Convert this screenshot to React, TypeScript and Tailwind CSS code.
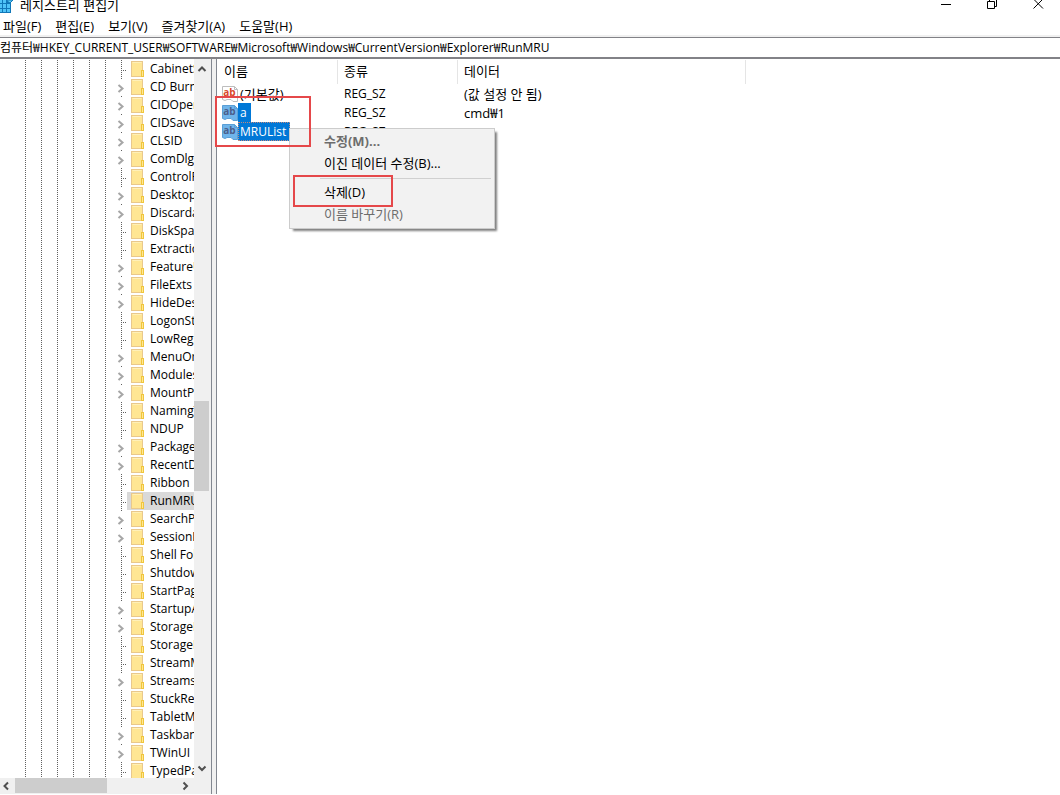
import { useState } from "react";
import clsx from "clsx";

interface TreeKey {
  name: string;
  expandable?: boolean;
}

interface RegistryValue {
  name: string;
  type: string;
  data: string;
}

const MENUS = ["파일(F)", "편집(E)", "보기(V)", "즐겨찾기(A)", "도움말(H)"];

const KEYS: TreeKey[] = [
  { name: "CabinetState" },
  { name: "CD Burning", expandable: true },
  { name: "CIDOpen", expandable: true },
  { name: "CIDSave", expandable: true },
  { name: "CLSID", expandable: true },
  { name: "ComDlg32", expandable: true },
  { name: "ControlPanel" },
  { name: "Desktop", expandable: true },
  { name: "Discardable", expandable: true },
  { name: "DiskSpaceChecking" },
  { name: "Extractions" },
  { name: "FeatureUsage", expandable: true },
  { name: "FileExts", expandable: true },
  { name: "HideDesktopIcons", expandable: true },
  { name: "LogonStats" },
  { name: "LowRegistry" },
  { name: "MenuOrder", expandable: true },
  { name: "Modules", expandable: true },
  { name: "MountPoints2", expandable: true },
  { name: "NamingTemplates" },
  { name: "NDUP" },
  { name: "PackageState", expandable: true },
  { name: "RecentDocs", expandable: true },
  { name: "Ribbon" },
  { name: "RunMRU" },
  { name: "SearchPlatform", expandable: true },
  { name: "SessionInfo", expandable: true },
  { name: "Shell Folders" },
  { name: "Shutdown" },
  { name: "StartPage" },
  { name: "StartupApproved", expandable: true },
  { name: "StorageProvider", expandable: true },
  { name: "StorageInfo" },
  { name: "StreamMRU" },
  { name: "Streams", expandable: true },
  { name: "StuckRects3" },
  { name: "TabletMode" },
  { name: "Taskband", expandable: true },
  { name: "TWinUI", expandable: true },
  { name: "TypedPaths" },
];

const VALUES: RegistryValue[] = [
  { name: "(기본값)", type: "REG_SZ", data: "(값 설정 안 됨)" },
  { name: "a", type: "REG_SZ", data: "cmd₩1" },
  { name: "MRUList", type: "REG_SZ", data: "" },
];

function AppIcon() {
  return (
    <svg width="14" height="14" viewBox="0 0 14 14" className="shrink-0">
      <path d="M0 0H11V13H0Z" fill="#1177b8" />
      <path d="M0 0H2V3H0ZM3 0H6V3H3ZM0 4H2V8H0ZM3 4H6V8H3ZM7 4H10V8H7ZM0 9H2V12H0ZM3 9H6V12H3ZM7 9H10V12H7Z" fill="#4fc3f7" />
      <path d="M7 0H13L10 3L7 1Z" fill="#5ccbf5" stroke="#1177b8" />
    </svg>
  );
}

function FolderIcon() {
  return (
    <svg width="14" height="16" viewBox="0 0 14 16" className="shrink-0">
      <rect x="0.5" y="0.5" width="11" height="15" fill="#ffe694" stroke="#e9c88c" />
      <path d="M1.5 1.5H10.5" stroke="#fff0b8" />
      <rect x="10.5" y="9.5" width="2" height="6" fill="#ffe694" stroke="#f0c63c" />
    </svg>
  );
}

// Dotted guide lines of the parent levels, then the branch or the chevron
function TreeBranch({ expandable }: { expandable?: boolean }) {
  return (
    <svg width="102" height="18" viewBox="0 0 102 18" className="shrink-0" fill="none">
      <path
        d="M0.5 0V18M16.5 0V18M32.5 0V18M48.5 0V18M64.5 0V18M80.5 0V18"
        stroke="#606060"
        strokeDasharray="1 1"
      />
      {expandable ? (
        <>
          <path d="M96 0.5H97" stroke="#606060" />
          <path d="M93.5 7L97.5 10.5L93.5 14" stroke="#a6a6a6" strokeWidth="2" />
        </>
      ) : (
        <path d="M96.5 0V18M98 10.5H102" stroke="#606060" strokeDasharray="1 1" />
      )}
    </svg>
  );
}

function StringIcon({ selected }: { selected: boolean }) {
  return (
    <svg width="16" height="16" viewBox="0 0 16 16" className="shrink-0">
      <path
        d="M0.5 0.5H12.5L15.5 3.5V15.5H11L9 13.5H5L3 14.5L0.5 13.5Z"
        fill={selected ? "#6fb4ea" : "#ffffff"}
        stroke={selected ? "#5a9fd6" : "#bdbdbd"}
      />
      <path d="M12.5 0.5V3.5H15.5" fill="none" stroke={selected ? "#5a9fd6" : "#bdbdbd"} />
      <text
        x="7.5"
        y="10"
        textAnchor="middle"
        fontSize="10"
        fontWeight="700"
        fontFamily="Open Sans, sans-serif"
        fill={selected ? "#4b5f8c" : "#d9472b"}
      >
        ab
      </text>
    </svg>
  );
}

function Arrow({ d }: { d: string }) {
  return (
    <svg width="10" height="10" viewBox="0 0 10 10" fill="none">
      <path d={d} stroke="#505050" strokeWidth="2" />
    </svg>
  );
}

function TitleBar() {
  return (
    <header className="flex h-4 shrink-0 items-start justify-between overflow-hidden">
      <div className="flex items-start gap-1.5">
        <AppIcon />
        <h1 className="text-[13px] leading-[10px]">레지스트리 편집기</h1>
      </div>
      <div className="flex gap-[35px] pr-4">
        <button type="button" aria-label="최소화">
          <svg width="11" height="10" viewBox="0 0 11 10">
            <path d="M0 4.5H10" stroke="#000" />
          </svg>
        </button>
        <button type="button" aria-label="이전 크기로 복원">
          <svg width="11" height="10" viewBox="0 0 11 10" fill="none" stroke="#000">
            <path d="M0.5 1.5H7.5V8.5H0.5ZM2.5 1V0M9.5 0V6.5H8" />
          </svg>
        </button>
        <button type="button" aria-label="닫기">
          <svg width="11" height="10" viewBox="0 0 11 10">
            <path d="M0.5 -1L10 8.5M10 -1L0.5 8.5" stroke="#000" />
          </svg>
        </button>
      </div>
    </header>
  );
}

function TreePane() {
  const [current, setCurrent] = useState("RunMRU");

  return (
    <aside className="flex w-[212px] shrink-0 flex-col border-r border-[#828790]">
      <div className="flex min-h-0 flex-1">
        <ul className="min-w-0 flex-1 overflow-hidden pt-px">
          {KEYS.map((key) => (
            <li key={key.name}>
              <button
                type="button"
                onClick={() => setCurrent(key.name)}
                className="flex h-[18px] w-full items-center pl-[25px] text-left"
              >
                <TreeBranch expandable={key.expandable} />
                <span
                  className={clsx(
                    "flex h-full min-w-0 flex-1 items-center gap-[5px] overflow-hidden whitespace-nowrap pl-1",
                    current === key.name && "bg-[#d9d9d9]"
                  )}
                >
                  <FolderIcon />
                  {key.name}
                </span>
              </button>
            </li>
          ))}
        </ul>

        {/* Vertical scrollbar */}
        <div className="flex w-[17px] shrink-0 flex-col justify-between bg-[#f0f0f0] pr-0.5">
          <button type="button" aria-label="위로" className="flex h-5 items-center justify-center">
            <Arrow d="M1.5 7L5 3.5L8.5 7" />
          </button>
          <div className="flex-1 pt-[322px]">
            <div className="h-[90px] bg-[#cdcdcd]" />
          </div>
          <button type="button" aria-label="아래로" className="flex h-5 items-center justify-center">
            <Arrow d="M1.5 3.5L5 7L8.5 3.5" />
          </button>
        </div>
      </div>

      {/* Horizontal scrollbar */}
      <div className="flex h-4 shrink-0 bg-[#f0f0f0] pr-4">
        <button type="button" aria-label="왼쪽" className="flex w-[15px] items-center pl-px">
          <Arrow d="M7 1.5L3.5 5L7 8.5" />
        </button>
        <div className="flex-1">
          <div className="h-[15px] w-[92px] bg-[#cdcdcd]" />
        </div>
        <button type="button" aria-label="오른쪽" className="flex w-[15px] items-center">
          <Arrow d="M3.5 1.5L7 5L3.5 8.5" />
        </button>
      </div>
    </aside>
  );
}

function ContextMenu() {
  const item = "flex h-[22px] w-full items-center pl-[34px]";
  return (
    <div className="absolute left-[72px] top-[69px] w-[206px] border border-[#cccccc] bg-[#f2f2f2] pb-[3px] pt-px text-[13px] shadow-[3px_3px_2px_-1px_#808080]">
      <button type="button" className={clsx(item, "font-bold text-[#6d6d6d]")}>
        수정(M)...
      </button>
      <button type="button" className={item}>
        이진 데이터 수정(B)...
      </button>
      <div className="ml-[30px] mr-[3px] mt-1 h-[3px] border-t border-[#d0d0d0]" />
      <button type="button" className={item}>
        삭제(D)
      </button>
      <button type="button" disabled className={clsx(item, "text-[#6d6d6d]")}>
        이름 바꾸기(R)
      </button>
      <div className="pointer-events-none absolute left-[3px] top-[46px] h-8 w-[100px] border-2 border-[#e5484a]" />
    </div>
  );
}

function ValuePane() {
  const [selected, setSelected] = useState(["a", "MRUList"]);

  return (
    <main className="relative min-w-0 flex-1 border-l border-[#828790]">
      <table className="mt-px w-[529px] table-fixed border-separate border-spacing-0 text-left">
        <thead>
          <tr className="h-6 text-[13px]">
            <th className="w-[121px] border-r border-[#e5e5e5] p-0 pb-0.5 pl-[7px] font-normal">이름</th>
            <th className="w-[120px] border-r border-[#e5e5e5] p-0 pb-0.5 pl-1.5 font-normal">종류</th>
            <th className="border-r border-[#e5e5e5] p-0 pb-0.5 pl-1.5 font-normal">데이터</th>
          </tr>
        </thead>
        <tbody>
          {VALUES.map((value) => {
            const isSelected = selected.includes(value.name);
            return (
              <tr key={value.name} className="h-[19px]" onClick={() => setSelected([value.name])}>
                <td className="p-0 pl-[5px]">
                  <div className="flex h-[19px] items-center">
                    <StringIcon selected={isSelected} />
                    <span
                      className={clsx(
                        "flex h-[19px] items-center border pl-px pr-[3px]",
                        isSelected ? "bg-[#0078d7] text-white" : "text-[13px]",
                        value.name === "MRUList" && isSelected ? "border-dotted border-[#c08a80]" : "border-transparent"
                      )}
                    >
                      {value.name}
                    </span>
                  </div>
                </td>
                <td className="p-0 pl-1.5">{value.type}</td>
                <td className="p-0 pl-1.5 text-[13px]">{value.data}</td>
              </tr>
            );
          })}
        </tbody>
      </table>

      <ContextMenu />
      <div className="pointer-events-none absolute left-[-2px] top-[37px] h-[51px] w-24 border-2 border-[#e5484a]" />
    </main>
  );
}

export default function App() {
  const [path, setPath] = useState(
    "컴퓨터₩HKEY_CURRENT_USER₩SOFTWARE₩Microsoft₩Windows₩CurrentVersion₩Explorer₩RunMRU"
  );

  return (
    <div className="flex h-screen flex-col overflow-hidden bg-white pb-px font-['Open_Sans','Noto_Sans_CJK_KR',sans-serif] text-[12px] leading-[18px] text-black">
      <TitleBar />

      <nav className="flex h-[19px] shrink-0 items-center gap-3.5 pl-[3px] text-[13px]">
        {MENUS.map((menu) => (
          <button key={menu} type="button">
            {menu}
          </button>
        ))}
      </nav>

      {/* Address bar */}
      <div className="shrink-0 border-t-2 border-[#f0f0f0]">
        <input
          type="text"
          aria-label="주소"
          value={path}
          onChange={(e) => setPath(e.target.value)}
          className="block h-[22px] w-full border-b-2 border-t border-[#828287] pb-0.5 focus:outline-none"
        />
      </div>

      <div className="flex min-h-0 flex-1 bg-[#f0f0f0]">
        <div className="flex shrink-0 bg-white">
          <TreePane />
        </div>
        <div className="ml-1 flex min-w-0 flex-1 bg-white">
          <ValuePane />
        </div>
      </div>
    </div>
  );
}
